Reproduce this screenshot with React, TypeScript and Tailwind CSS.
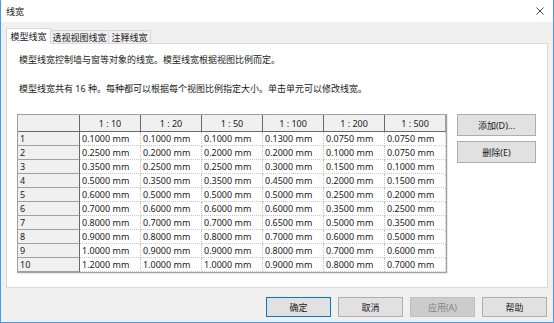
import React from "react";

const cols = ["1 : 10", "1 : 20", "1 : 50", "1 : 100", "1 : 200", "1 : 500"];
const rows: string[][] = [
  ["0.1000", "0.1000", "0.1000", "0.1300", "0.0750", "0.0750"],
  ["0.2500", "0.2000", "0.2000", "0.2000", "0.1000", "0.0750"],
  ["0.3500", "0.2500", "0.2500", "0.3000", "0.1500", "0.1000"],
  ["0.5000", "0.3500", "0.3500", "0.4500", "0.2000", "0.1500"],
  ["0.6000", "0.5000", "0.5000", "0.5000", "0.2500", "0.2000"],
  ["0.7000", "0.6000", "0.6000", "0.6000", "0.3500", "0.2500"],
  ["0.8000", "0.7000", "0.7000", "0.6500", "0.5000", "0.3500"],
  ["0.9000", "0.8000", "0.8000", "0.7000", "0.6000", "0.5000"],
  ["1.0000", "0.9000", "0.9000", "0.8000", "0.7000", "0.6000"],
  ["1.2000", "1.0000", "1.0000", "0.9000", "0.8000", "0.7000"],
];

const font = { fontFamily: '"Noto Sans", "Noto Sans CJK SC", sans-serif' };

export default function App() {
  return (
    <div
      className="w-[554px] h-[323px] flex flex-col border-x border-b border-[#4a9be0] bg-[#f0f0f0] text-[9px] text-[#1a1a1a] leading-none overflow-hidden"
      style={font}
    >
      {/* Title bar */}
      <div className="h-[22px] bg-white flex items-center justify-between pl-[5px] pr-[9px] shrink-0">
        <span className="text-[9px]">线宽</span>
        <svg width="8" height="8" viewBox="0 0 8 8" className="text-[#444]">
          <path d="M0.5 0.5 L7.5 7.5 M7.5 0.5 L0.5 7.5" stroke="currentColor" strokeWidth="1" />
        </svg>
      </div>

      {/* Body */}
      <div className="flex-1 flex flex-col pl-[5px] pr-[5px] pt-[6px]">
        {/* Tabs */}
        <div className="flex items-end h-[15px] relative z-10">
          <div className="h-[16px] w-[45px] bg-white border-x border-t border-[#d9d9d9] flex items-center justify-center -mb-px">
            模型线宽
          </div>
          <div className="h-[13px] w-[58px] bg-[#f0f0f0] border-t border-r border-[#d9d9d9] flex items-center justify-center">
            透视视图线宽
          </div>
          <div className="h-[13px] w-[42px] bg-[#f0f0f0] border-t border-r border-[#d9d9d9] flex items-center justify-center">
            注释线宽
          </div>
        </div>

        {/* Panel */}
        <div className="h-[245px] bg-white border border-[#d9d9d9] flex flex-col pt-[10px] pl-[12px]">
          <div className="h-[10px] flex items-center">模型线宽控制墙与窗等对象的线宽。模型线宽根据视图比例而定。</div>
          <div className="h-[10px] flex items-center mt-[19px]">
            模型线宽共有 16 种。每种都可以根据每个视图比例指定大小。单击单元可以修改线宽。
          </div>

          <div className="flex mt-[21px] -ml-[2px]">
            {/* Table */}
            <div className="border border-[#a0a0a0] flex flex-col bg-white shadow-[1px_1px_1px_rgba(0,0,0,0.08)]">
              <div className="flex h-[17px]">
                <div className="w-[62px] bg-[#f0f0f0] border-r border-b border-[#696969]" />
                {cols.map((c) => (
                  <div
                    key={c}
                    className="w-[61px] bg-[#f0f0f0] border-r border-b border-[#696969] last:border-r-[#a0a0a0] flex items-center justify-center"
                  >
                    {c}
                  </div>
                ))}
              </div>
              {rows.map((r, i) => (
                <div key={i} className="flex h-[14px]">
                  <div className="w-[62px] bg-[#f0f0f0] border-r border-r-[#696969] border-b border-b-[#a0a0a0] flex items-center pl-[2px]">
                    {i + 1}
                  </div>
                  {r.map((v, j) => (
                    <div
                      key={j}
                      className="w-[61px] border-r border-b border-dotted border-[#c8c8c8] flex items-center pl-[2px]"
                    >
                      {v} mm
                    </div>
                  ))}
                </div>
              ))}
            </div>

            {/* Side buttons */}
            <div className="flex flex-col gap-[5px] ml-[10px]">
              <div className="w-[79px] h-[22px] bg-[#e1e1e1] border border-[#adadad] flex items-center justify-center">
                添加(D)...
              </div>
              <div className="w-[79px] h-[22px] bg-[#e1e1e1] border border-[#adadad] flex items-center justify-center">
                删除(E)
              </div>
            </div>
          </div>
        </div>

        {/* Bottom buttons */}
        <div className="flex justify-end items-start gap-[7px] mt-[9px] pr-[1px]">
          <div className="w-[65px] h-[20px] bg-[#e1e1e1] border border-[#0078d7] flex items-center justify-center">
            确定
          </div>
          <div className="w-[65px] h-[20px] bg-[#e1e1e1] border border-[#adadad] flex items-center justify-center">
            取消
          </div>
          <div className="w-[65px] h-[20px] bg-[#cccccc] border border-[#bfbfbf] text-[#838383] flex items-center justify-center">
            应用(A)
          </div>
          <div className="w-[65px] h-[20px] bg-[#e1e1e1] border border-[#adadad] flex items-center justify-center">
            帮助
          </div>
        </div>
      </div>
    </div>
  );
}
